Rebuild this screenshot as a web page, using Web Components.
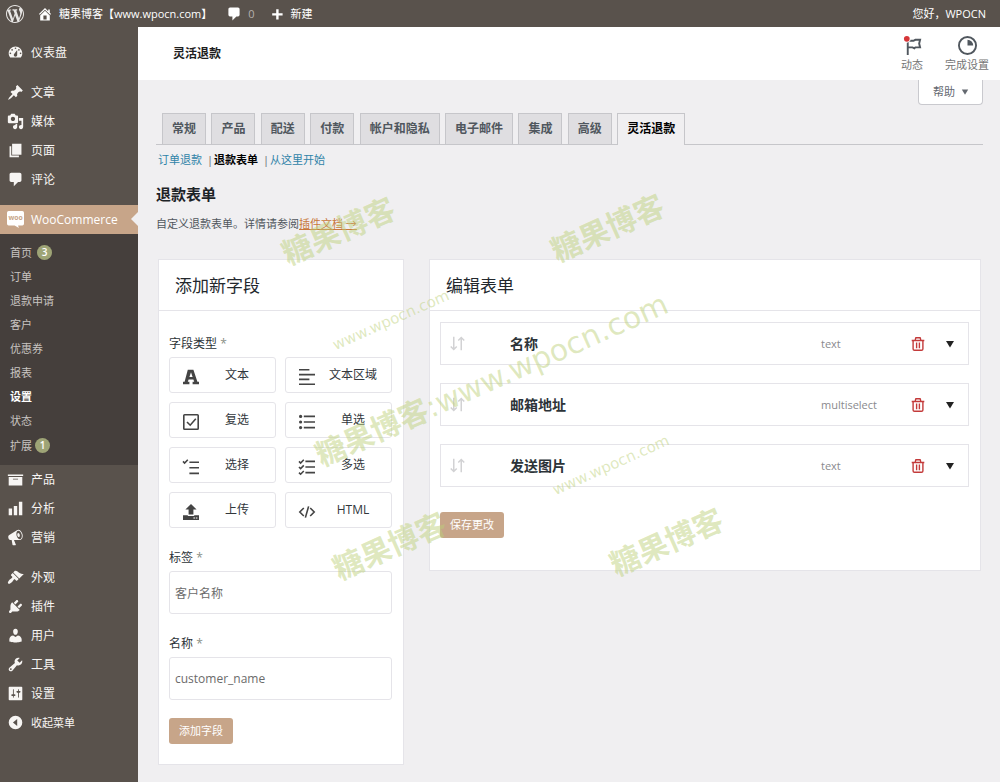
<!DOCTYPE html>
<html lang="zh-CN">
<head>
<meta charset="utf-8">
<meta name="viewport" content="width=device-width, initial-scale=1">
<title>灵活退款</title>
<style>
  :root {
    --base: #59524c;
    --submenu: #453f3c;
    --accent: #c7a589;
    --badge: #9ea476;
    --page: #f0eff1;
    --line: #e5e4e9;
  }
  body {
    margin: 0;
    background: var(--page);
    color: #50575e;
    font: 11px/20px "Open Sans", "Noto Sans CJK SC", sans-serif;
  }
</style>
</head>
<body>
<refund-admin></refund-admin>

<script>
const ICONS = {
  wordpress: '<path d="M20 10c0-5.51-4.49-10-10-10C4.48 0 0 4.49 0 10c0 5.52 4.48 10 10 10 5.51 0 10-4.48 10-10zM7.78 15.37L4.37 6.22c.55-.02 1.17-.08 1.17-.08.5-.06.44-1.13-.06-1.11 0 0-1.45.11-2.37.11-.18 0-.37 0-.58-.01C4.12 2.69 6.87 1.11 10 1.11c2.33 0 4.45.87 6.05 2.34-.68-.11-1.65.39-1.65 1.58 0 .74.45 1.36.9 2.1.35.61.55 1.36.55 2.46 0 1.49-1.4 5-1.4 5l-3.03-8.37c.54-.02.82-.17.82-.17.5-.05.44-1.25-.06-1.22 0 0-1.44.12-2.38.12-.87 0-2.33-.12-2.33-.12-.5-.03-.56 1.2-.06 1.22l.92.08 1.26 3.41zM17.41 10c.24-.64.74-1.87.43-4.25.7 1.29 1.05 2.71 1.05 4.25 0 3.29-1.73 6.24-4.4 7.78.97-2.59 1.94-5.2 2.92-7.78zM6.1 18.09C3.12 16.65 1.11 13.53 1.11 10c0-1.3.23-2.48.72-3.59C3.25 10.3 4.67 14.2 6.1 18.09zm4.03-6.63l2.58 6.98c-.86.29-1.76.45-2.71.45-.79 0-1.57-.11-2.29-.33.81-2.38 1.62-4.74 2.42-7.1z"/>',
  home: '<path fill-rule="evenodd" d="M16 8.5l1.53 1.53-1.06 1.06L10 4.6l-6.47 6.49-1.06-1.06L10 2.5l4 4v-2h2v4zm-6-2.46l6 5.99V18H4v-5.97zM12 17v-5H8v5h4z"/>',
  plus: '<path d="M17 9v3h-5v5H9v-5H4V9h5V4h3v5h5z"/>',
  dashboard: '<path fill-rule="evenodd" d="M3.76 16h12.48c1.1-1.37 1.76-3.11 1.76-5 0-4.42-3.58-8-8-8s-8 3.58-8 8c0 1.89.66 3.63 1.76 5zM10 4c.55 0 1 .45 1 1s-.45 1-1 1-1-.45-1-1 .45-1 1-1zM6 6c.55 0 1 .45 1 1s-.45 1-1 1-1-.45-1-1 .45-1 1-1zm8 0c.55 0 1 .45 1 1s-.45 1-1 1-1-.45-1-1 .45-1 1-1zm-5.37 5.55L12 7v6c0 1.1-.9 2-2 2s-2-.9-2-2c0-.57.24-1.08.63-1.45zM4 10c.55 0 1 .45 1 1s-.45 1-1 1-1-.45-1-1 .45-1 1-1zm12 0c.55 0 1 .45 1 1s-.45 1-1 1-1-.45-1-1 .45-1 1-1z"/>',
  post: '<path d="M10.44 3.02l1.82-1.82 6.36 6.35-1.83 1.82c-1.05-.68-2.48-.57-3.41.36l-.75.75c-.92.93-1.04 2.35-.35 3.41l-1.83 1.82-2.41-2.41-2.8 2.79c-.42.42-3.38 2.71-3.8 2.29s1.86-3.39 2.28-3.81l2.79-2.79L4.1 9.36l1.83-1.82c1.05.69 2.48.57 3.4-.36l.75-.75c.93-.92 1.05-2.35.36-3.41z"/>',
  media: '<path fill-rule="evenodd" d="M13 11V4c0-.55-.45-1-1-1h-1.67L9 1H5L3.67 3H2c-.55 0-1 .45-1 1v7c0 .55.45 1 1 1h10c.55 0 1-.45 1-1zM7 4.5c1.38 0 2.5 1.12 2.5 2.5S8.38 9.5 7 9.5 4.5 8.38 4.5 7 5.62 4.5 7 4.5z"/><path d="M14 6h5v10.5c0 1.38-1.12 2.5-2.5 2.5S14 17.88 14 16.5s1.12-2.5 2.5-2.5c.17 0 .34.02.5.05V9h-3V6zm-4 8.05V13h2v3.5c0 1.38-1.12 2.5-2.5 2.5S7 17.88 7 16.5 8.12 14 9.5 14c.17 0 .34.02.5.05z"/>',
  page: '<path d="M6 15V2h11v13H6zm-1 1h9v2H3V5h2v11z"/>',
  comment: '<path d="M5 2h10c1.1 0 2 .9 2 2v7c0 1.1-.9 2-2 2h-2l-5 5v-5H5c-1.1 0-2-.9-2-2V4c0-1.1.9-2 2-2z"/>',
  woo: '<path d="M2 0h16q2 0 2 2v13q0 2-2 2h-5l1 3-5-3H2q-2 0-2-2V2q0-2 2-2z"/><text x="10" y="11" text-anchor="middle" font-size="8" font-weight="700" fill="#c7a589">woo</text>',
  archive: '<path fill-rule="evenodd" d="M19 4v2H1V4h18zM2 7h16v10H2V7zm11 3V9H7v1h6z"/>',
  chart: '<path d="M18 18V2h-4v16h4zm-6 0V7H8v11h4zm-6 0v-8H2v8h4z"/>',
  megaphone: '<path fill-rule="evenodd" d="M18.15 5.94c.46 1.62.38 3.22-.02 4.48-.42 1.28-1.26 2.18-2.3 2.48-.16.06-.26.06-.4.06-.06.02-.12.02-.18.02-.06.02-.14.02-.22.02h-6.8l2.22 5.5c.02.14-.06.26-.14.34-.08.1-.24.16-.34.16H6.95c-.1 0-.26-.06-.34-.16-.08-.08-.16-.2-.14-.34l-1-5.5H4.25l-.02-.02c-.5.06-1.08-.18-1.54-.62s-.88-1.08-1.06-1.88c-.24-.8-.2-1.56-.02-2.2.18-.62.58-1.08 1.06-1.3l.02-.02 9-5.4c.1-.06.18-.1.24-.16.06-.04.14-.08.24-.12.16-.08.28-.12.5-.18 1.04-.3 2.24.1 3.22.98s1.84 2.24 2.26 3.86zm-2.58 5.98h-.02c.4-.1.74-.34 1.04-.7.58-.7.86-1.76.86-3.04 0-.64-.1-1.3-.28-1.98-.34-1.36-1.02-2.5-1.78-3.24s-1.68-1.1-2.46-.88c-.82.22-1.4.96-1.7 2-.32 1.04-.28 2.36.06 3.72.38 1.36 1 2.5 1.8 3.24.78.74 1.62 1.1 2.48.88zm-2.54-7.08c.22-.04.42-.02.62.04.38.16.76.48 1.02 1s.42 1.2.42 1.78c0 .3-.04.56-.12.8-.18.48-.44.84-.86.94-.34.1-.8-.06-1.14-.4s-.64-.86-.78-1.5c-.18-.62-.12-1.24.02-1.72s.48-.84.82-.94z"/>',
  appearance: '<path d="M14.48 11.06L7.41 3.99l1.5-1.5c.5-.56 2.3-.47 3.51.32 1.21.8 1.43 1.28 2.91 2.1 1.18.64 2.45 1.26 4.45.85zm-.71.71L6.7 4.7 4.93 6.47c-.39.39-.39 1.02 0 1.41l1.06 1.06c.39.39.39 1.03 0 1.42-.6.6-1.43 1.11-2.21 1.69-.35.26-.7.53-1.01.84C1.43 14.23.4 16.08 1.4 17.07c.99 1 2.84-.03 4.18-1.36.31-.31.58-.66.85-1.02.57-.78 1.08-1.61 1.69-2.21.39-.39 1.02-.39 1.41 0l1.06 1.06c.39.39 1.02.39 1.41 0z"/>',
  plugins: '<path d="M13.11 4.36L9.87 7.6 8 5.73l3.24-3.24c.35-.34 1.05-.2 1.56.32.52.51.66 1.21.31 1.55zm-8 1.77l.91-1.12 9.01 9.01-1.19.84c-.71.71-2.63 1.16-3.82 1.16H6.14L4.9 17.26c-.59.59-1.54.59-2.12 0-.59-.58-.59-1.53 0-2.12l1.24-1.24v-3.88c0-1.13.4-3.19 1.09-3.89zm7.26 3.97l3.24-3.24c.34-.35 1.04-.21 1.55.31.52.51.66 1.21.31 1.55l-3.24 3.25z"/>',
  users: '<path d="M10 9.25c-2.27 0-2.73-3.44-2.73-3.44C7 4.02 7.82 2 9.97 2c2.16 0 2.98 2.02 2.71 3.81 0 0-.41 3.44-2.68 3.44zm0 2.57L12.72 10c2.39 0 4.52 2.33 4.52 4.53v2.49s-3.65 1.13-7.24 1.13c-3.65 0-7.24-1.13-7.24-1.13v-2.49c0-2.25 1.94-4.48 4.47-4.48z"/>',
  tools: '<path fill-rule="evenodd" d="M16.68 9.77c-1.34 1.34-3.3 1.67-4.95.99l-5.41 6.52c-.99.99-2.59.99-3.58 0s-.99-2.59 0-3.57l6.52-5.42c-.68-1.65-.35-3.61.99-4.95 1.28-1.28 3.12-1.62 4.72-1.06l-2.89 2.89 2.82 2.82 2.86-2.87c.53 1.58.18 3.39-1.08 4.65zM3.81 16.21c.4.39 1.04.39 1.43 0 .4-.4.4-1.04 0-1.43-.39-.4-1.03-.4-1.43 0-.39.39-.39 1.03 0 1.43z"/>',
  settings: '<path fill-rule="evenodd" d="M18 17V3c0-.55-.45-1-1-1H3c-.55 0-1 .45-1 1v14c0 .55.45 1 1 1h14c.55 0 1-.45 1-1zM8 11h1c.55 0 1 .45 1 1s-.45 1-1 1H8v1.5c0 .28-.22.5-.5.5s-.5-.22-.5-.5V13H6c-.55 0-1-.45-1-1s.45-1 1-1h1V5.5c0-.28.22-.5.5-.5s.5.22.5.5V11zm5-2h-1c-.55 0-1-.45-1-1s.45-1 1-1h1V5.5c0-.28.22-.5.5-.5s.5.22.5.5V7h1c.55 0 1 .45 1 1s-.45 1-1 1h-1v5.5c0 .28-.22.5-.5.5s-.5-.22-.5-.5V9z"/>',
  collapse: '<path fill-rule="evenodd" d="M10 2a8 8 0 1 0 0 16 8 8 0 0 0 0-16zm2 4v8l-5-4z"/>',
  flag: '<path fill="none" stroke="currentColor" stroke-width="2" d="M5 20V5h6l2-1h5l-1 4 1 4h-5l-1 1-2-1H5"/><circle cx="4" cy="3" r="4" fill="#fff"/><circle cx="4" cy="3" r="3" fill="#d63638"/>',
  progress: '<circle cx="10" cy="10" r="9" fill="none" stroke="currentColor" stroke-width="2"/><path d="M10 4a6 6 0 0 1 6 6h-6z"/>',
  caret: '<path d="M2 4h16l-8 13z"/>',
  text: '<path d="M6 1h7l5 15h2v3h-8v-3h2l-1-3H7l-1 3h2v3H0v-3h2zm4 3l-2 6h4z" fill-rule="evenodd"/>',
  textarea: '<path d="M0 0h13v2H0zm0 6h20v2H0zm0 6h13v2H0zm0 6h20v2H0z"/>',
  checkbox: '<path fill="none" stroke="currentColor" stroke-width="2" d="M2 1h16q1 0 1 1v16q0 1-1 1H2q-1 0-1-1V2q0-1 1-1zM5 10l4 4 7-8"/>',
  radio: '<path d="M6 2h14v2H6zm0 7h14v2H6zm0 7h14v2H6z"/><circle cx="2" cy="3" r="2"/><circle cx="2" cy="10" r="2"/><circle cx="2" cy="17" r="2"/>',
  select: '<path d="M8 3h12v2H8zm0 7h12v2H8zm0 7h12v2H8z"/><path fill="none" stroke="currentColor" stroke-width="2" d="M0 3l2 2 4-4"/>',
  multi: '<path d="M8 2h12v2H8zm0 7h12v2H8zm0 7h12v2H8z"/><path fill="none" stroke="currentColor" stroke-width="2" d="M0 3l2 2 4-4M0 10l2 2 4-4M0 17l2 2 4-4"/>',
  upload: '<path d="M10 0l7 7h-4v6H7V7H3z"/><path fill-rule="evenodd" d="M0 14h6v1h8v-1h6v6H0zm13 3v1h2v-1zm3 0v1h2v-1z"/>',
  html: '<path fill="none" stroke="currentColor" stroke-width="2" d="M6 5l-5 5 5 5M14 5l5 5-5 5M12 3L8 17"/>',
  sort: '<path fill="none" stroke="currentColor" stroke-width="2" d="M5 1v17M1 14l4 4 4-4M15 19V2M11 6l4-4 4 4"/>',
  trash: '<path fill="none" stroke="currentColor" stroke-width="2" d="M3 5h14v12q0 2-2 2H5q-2 0-2-2zM1 5h18M6 4l1-3h6l1 3M8 8v8M12 8v8"/>'
};

/* Base for every element here: fills an open shadow root from render(). */
class View extends HTMLElement {
  connectedCallback() {
    if (this.shadowRoot) return;
    const t = document.createElement('template');
    t.innerHTML = '<style>*{box-sizing:border-box}a{text-decoration:none;color:inherit}button,input{font:inherit}ul,ol{list-style:none;margin:0;padding:0}</style>' + this.render();
    this.attachShadow({ mode: 'open' }).append(t.content.cloneNode(true));
  }
  attr(n) { return this.getAttribute(n) || ''; }
}
const define = (name, render) =>
  customElements.define(name, class extends View { render() { return render(this); } });

define('wp-icon', el => `
  <style>:host{display:block;flex:none;width:17px;height:17px}svg{display:block;width:100%;height:100%;overflow:visible}</style>
  <svg viewBox="0 0 20 20" fill="currentColor" aria-hidden="true">${ICONS[el.attr('name')]}</svg>`);

define('admin-bar', () => `
  <style>
    :host{display:block;background:var(--base);color:#fff}
    nav{display:flex;align-items:center;height:27px;padding:0 14px 0 6px}
    a{display:flex;align-items:center;gap:6px}
    .site{margin-left:13px}.comments{margin-left:14px}.new{margin-left:14px}.me{margin-left:auto}
    .count{color:#b5b0ac}
    .small{width:16px;height:16px}
    .logo{width:18px;height:18px;color:#e8e6e4}
  </style>
  <nav aria-label="工具栏">
    <a href="#" aria-label="WordPress"><wp-icon class="logo" name="wordpress"></wp-icon></a>
    <a class="site" href="#"><wp-icon class="small" name="home"></wp-icon>糖果博客【www.wpocn.com】</a>
    <a class="comments" href="#"><wp-icon class="small" name="comment"></wp-icon><span class="count">0</span></a>
    <a class="new" href="#"><wp-icon class="small" name="plus"></wp-icon>新建</a>
    <a class="me" href="#">您好，WPOCN</a>
  </nav>`);

define('menu-item', el => `
  <style>
    :host{display:block;color:#f7f5f3}
    a{display:flex;align-items:center;gap:7px;height:29px;padding-left:7px;font-size:12px;position:relative}
    :host([current]) a{background:var(--accent);color:#fff}
    :host([current]) a::after{content:"";position:absolute;right:0;top:7px;border:7px solid transparent;border-right-color:var(--page);border-left:0}
    :host([small]) a{font-size:11px}
  </style>
  <a href="#"><wp-icon name="${el.attr('icon')}"></wp-icon><slot></slot></a>`);

define('submenu-item', el => `
  <style>
    :host{display:block;color:#c8c4c1}
    a{display:flex;align-items:center;height:24px;padding-left:10px;gap:5px}
    :host([count]) a{height:25px}
    :host([current]) a{color:#fff;font-weight:700}
    b{width:15px;height:15px;border-radius:8px;background:var(--badge);color:#fff;font-size:10px;line-height:15px;text-align:center;font-weight:600}
    :host([tight]) a{gap:3px}
  </style>
  <a href="#"><slot></slot>${el.hasAttribute('count') ? `<b>${el.attr('count')}</b>` : ''}</a>`);

define('admin-menu', () => `
  <style>
    :host{display:block;background:var(--base)}
    nav{display:flex;flex-direction:column;gap:11px;padding:11px 0 24px}
    .sub{background:var(--submenu);padding:6px 0 7px}
  </style>
  <nav aria-label="主菜单">
    <div><menu-item icon="dashboard">仪表盘</menu-item></div>
    <div>
      <menu-item icon="post">文章</menu-item>
      <menu-item icon="media">媒体</menu-item>
      <menu-item icon="page">页面</menu-item>
      <menu-item icon="comment">评论</menu-item>
    </div>
    <div>
      <menu-item icon="woo" current>WooCommerce</menu-item>
      <div class="sub">
        <submenu-item count="3">首页</submenu-item>
        <submenu-item>订单</submenu-item>
        <submenu-item>退款申请</submenu-item>
        <submenu-item>客户</submenu-item>
        <submenu-item>优惠券</submenu-item>
        <submenu-item>报表</submenu-item>
        <submenu-item current>设置</submenu-item>
        <submenu-item>状态</submenu-item>
        <submenu-item count="1" tight>扩展</submenu-item>
      </div>
      <menu-item icon="archive">产品</menu-item>
      <menu-item icon="chart">分析</menu-item>
      <menu-item icon="megaphone">营销</menu-item>
    </div>
    <div>
      <menu-item icon="appearance">外观</menu-item>
      <menu-item icon="plugins">插件</menu-item>
      <menu-item icon="users">用户</menu-item>
      <menu-item icon="tools">工具</menu-item>
      <menu-item icon="settings">设置</menu-item>
      <menu-item icon="collapse" small>收起菜单</menu-item>
    </div>
  </nav>`);

define('page-header', () => `
  <style>
    :host{display:flex;align-items:center;height:53px;background:#fff;padding:0 11px 0 35px}
    h1{margin:0 auto 0 0;font-size:12px;line-height:20px;color:#1e1e1e;font-weight:600}
    button{display:flex;flex-direction:column;align-items:center;gap:2px;border:0;padding:2px 0 0;background:none;color:#757575;line-height:16px;margin-left:22px}
    wp-icon{width:19px;height:19px;color:#50575e}
  </style>
  <h1>灵活退款</h1>
  <button type="button"><wp-icon name="flag"></wp-icon>动态</button>
  <button type="button"><wp-icon name="progress"></wp-icon>完成设置</button>`);

define('help-toggle', () => `
  <style>
    :host{display:flex;justify-content:flex-end}
    button{display:flex;align-items:center;gap:6px;height:25px;padding:0 13px 0 14px;border:1px solid #c9c9ce;border-top:0;border-radius:0 0 4px 4px;background:#fff;color:#646970}
    wp-icon{width:8px;height:8px}
  </style>
  <button type="button">帮助<wp-icon name="caret"></wp-icon></button>`);

define('settings-tabs', el => `
  <style>
    :host{display:block;border-bottom:1px solid #c6c6ca;padding-left:6px;font-size:13px;height:32px}
    a{display:inline-block;height:31px;padding:0 9px;margin-right:2px;border:1px solid #c6c6ca;border-bottom:0;background:#dfdee1;color:#50575e;font-size:12px;line-height:30px;font-weight:600;vertical-align:top}
    a[aria-current]{height:32px;background:var(--page);color:#000}
  </style>
  ${['常规', '产品', '配送', '付款', '帐户和隐私', '电子邮件', '集成', '高级', '灵活退款']
    .map((t, i, all) => `<a href="#"${i === all.length - 1 ? ' aria-current="page"' : ''}>${t}</a>`).join(' ')}`);

define('section-links', () => `
  <style>
    :host{display:block}
    ul{display:flex}
    li+li::before{content:"|";color:#646970;margin:0 1px 0 5px}
    a{color:#2f83a8}
    a[aria-current]{color:#000;font-weight:600}
  </style>
  <ul>
    <li><a href="#">订单退款</a></li>
    <li><a href="#" aria-current="page">退款表单</a></li>
    <li><a href="#">从这里开始</a></li>
  </ul>`);

define('settings-panel', el => `
  <style>
    :host{display:block;background:#fff;border:1px solid var(--line)}
    h3{margin:0;padding:0 16px;height:51px;line-height:51px;font-size:17px;font-weight:400;color:#23282d;border-bottom:1px solid var(--line)}
    div{padding:0 11px 0 10px}
  </style>
  <h3>${el.attr('heading')}</h3>
  <div><slot></slot></div>`);

define('primary-button', () => `
  <style>
    :host{display:block}
    button{display:block;height:26px;padding:0 10px;border:0;border-radius:3px;background:var(--accent);color:#fff;line-height:26px}
  </style>
  <button type="button"><slot></slot></button>`);

define('type-picker', () => `
  <style>
    :host{display:block}
    fieldset{border:0;margin:0;padding:0;min-width:0}
    legend{padding:0;margin-bottom:4px;font-size:12px;line-height:18px;color:#2c3338}
    i{font-style:normal;color:#8b8f86}
    div{display:grid;grid-template-columns:1fr 1fr;gap:9px}
    button{display:flex;align-items:center;height:36px;padding:0 0 0 13px;border:1px solid var(--line);border-radius:3px;background:#fff;color:#32373c;font-size:12px}
    wp-icon{width:16px;height:16px;margin-top:3px;color:#444}
    span{flex:1;text-align:center}
  </style>
  <fieldset>
    <legend>字段类型 <i>*</i></legend>
    <div>
      ${[['text', '文本'], ['textarea', '文本区域'], ['checkbox', '复选'], ['radio', '单选'],
         ['select', '选择'], ['multi', '多选'], ['upload', '上传'], ['html', 'HTML']]
        .map(([icon, t]) => `<button type="button"><wp-icon name="${icon}"></wp-icon><span>${t}</span></button>`).join('')}
    </div>
  </fieldset>`);

define('text-field', el => `
  <style>
    :host{display:block;font-size:12px}
    label{display:block;margin-bottom:4px;line-height:18px;color:#2c3338}
    i{font-style:normal;color:#8b8f86}
    input{display:block;width:100%;height:43px;padding:0 5px;border:1px solid var(--line);border-radius:3px;background:#fff;color:#6b6b6b;outline:0}
  </style>
  <label for="field">${el.attr('label')} <i>*</i></label>
  <input id="field" type="text" value="${el.attr('value')}">`);

define('form-row', el => `
  <style>
    :host{display:grid;grid-template-columns:44px minmax(0,1fr) 73px 16px 16px;column-gap:16px;align-items:center;height:43px;padding:0 10px 0 9px;border:1px solid var(--line);color:#8a8a8e}
    h4{margin:0;font-size:14px;line-height:20px;font-weight:600;color:#2c3338}
    button{display:flex;justify-content:center;padding:0;border:0;background:none}
    .sort{width:15px;height:15px;color:#d2d2d4}
    .trash{width:14px;height:14px;color:#c33a3a}
    .caret{width:10px;height:10px;color:#222}
  </style>
  <wp-icon class="sort" name="sort"></wp-icon>
  <h4>${el.attr('name')}</h4>
  <span>${el.attr('type')}</span>
  <button type="button" aria-label="删除"><wp-icon class="trash" name="trash"></wp-icon></button>
  <button type="button" aria-label="展开"><wp-icon class="caret" name="caret"></wp-icon></button>`);

/* Slanted stamp lying over the page; its centre is given by x and y. */
define('water-mark', el => `
  <style>
    :host{position:absolute;left:${el.attr('x')}px;top:${el.attr('y')}px;transform:translate(-50%,-50%) rotate(-24deg);
      font:30px/40px "DejaVu Sans","Noto Sans CJK SC",sans-serif;color:rgba(188,208,120,.48);white-space:nowrap;pointer-events:none}
    :host([small]){font-size:15px}
    ::slotted(b){font-weight:700}
  </style><slot></slot>`);

define('refund-admin', () => `
  <style>
    :host{display:flex;flex-direction:column;min-height:100vh;position:relative;overflow:hidden}
    .body{flex:1;display:grid;grid-template-columns:138px minmax(0,1fr)}
    .content{padding:0 17px 17px 18px}
    settings-tabs{margin-top:8px}
    section-links{margin:5px 2px 0}
    h2{margin:14px 0 10px;font-size:15px;line-height:20px;font-weight:700;color:#1d2327}
    p{margin:0}
    p a{color:#c8773c;text-decoration:underline}
    .panels{display:grid;grid-template-columns:246px minmax(0,1fr);gap:25px;align-items:start;margin:25px 2px 0}
    type-picker{padding-top:24px}
    text-field{margin-top:21px}
    .add{padding:18px 0 20px}
    .rows{display:grid;gap:18px;padding-top:11px}
    .save{padding:25px 0 32px}
  </style>
  <admin-bar></admin-bar>
  <div class="body">
    <admin-menu></admin-menu>
    <main>
      <page-header></page-header>
      <div class="content">
        <help-toggle></help-toggle>
        <settings-tabs></settings-tabs>
        <section-links></section-links>
        <h2>退款表单</h2>
        <p>自定义退款表单。详情请参阅<a href="#">插件文档 →</a></p>
        <div class="panels">
          <settings-panel heading="添加新字段">
            <type-picker></type-picker>
            <text-field label="标签" value="客户名称"></text-field>
            <text-field label="名称" value="customer_name"></text-field>
            <primary-button class="add">添加字段</primary-button>
          </settings-panel>
          <settings-panel heading="编辑表单">
            <div class="rows">
              <form-row name="名称" type="text"></form-row>
              <form-row name="邮箱地址" type="multiselect"></form-row>
              <form-row name="发送图片" type="text"></form-row>
            </div>
            <primary-button class="save">保存更改</primary-button>
          </settings-panel>
        </div>
      </div>
    </main>
  </div>
  <water-mark x="339" y="232"><b>糖果博客</b></water-mark>
  <water-mark x="608" y="229"><b>糖果博客</b></water-mark>
  <water-mark x="492" y="380"><b>糖果博客</b>:www.wpocn.com</water-mark>
  <water-mark x="391" y="320" small>www.wpocn.com</water-mark>
  <water-mark x="611" y="465" small>www.wpocn.com</water-mark>
  <water-mark x="390" y="547"><b>糖果博客</b></water-mark>
  <water-mark x="667" y="543"><b>糖果博客</b></water-mark>`);
</script>
</body>
</html>
